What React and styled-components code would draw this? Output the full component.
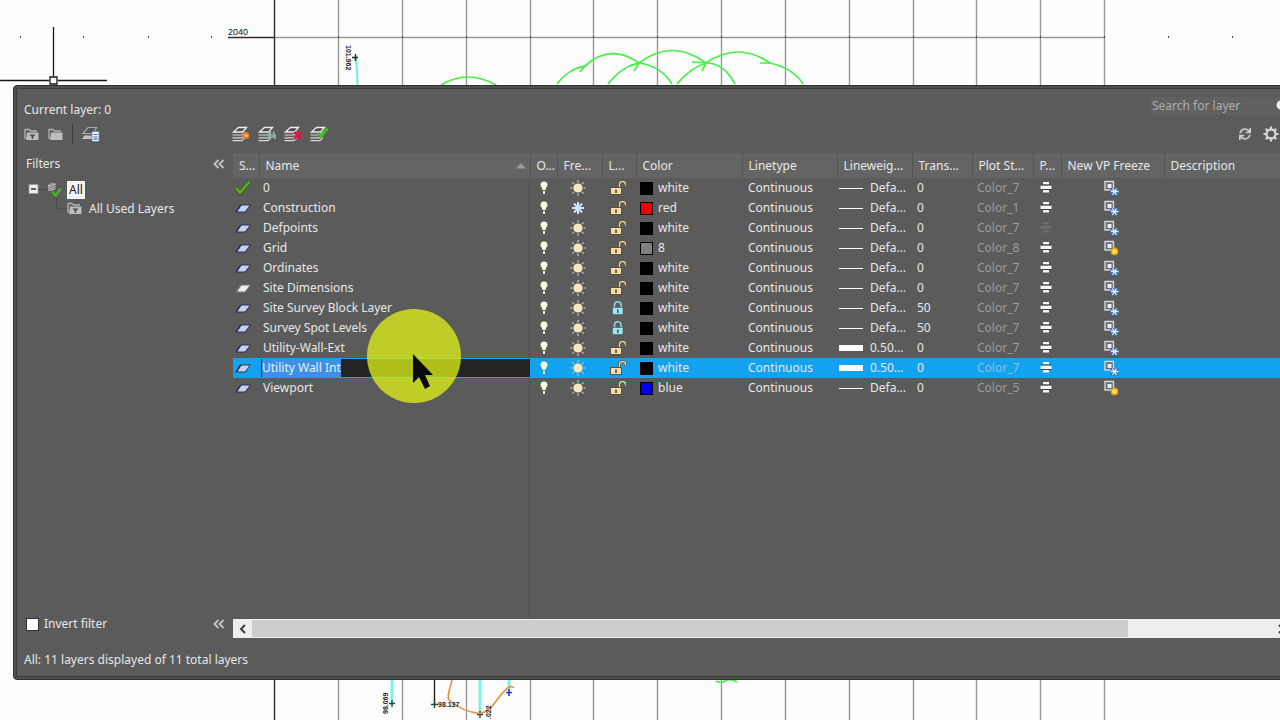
import React, { useEffect, useRef, useState } from 'react'
import styled, { createGlobalStyle } from 'styled-components'
import { FaSync } from 'react-icons/fa'

const GlobalStyle = createGlobalStyle`
  * { box-sizing: border-box; }
  body {
    margin: 0;
    overflow: hidden;
    background: #fdfdfd;
    color: #e8e8e8;
    font: 12px/20px 'Noto Sans', 'Open Sans', sans-serif;
  }
  button, input { font: inherit; color: inherit; }
`

const Page = styled.div`
  position: relative;
  display: grid;
  grid-template-rows: 85px 1fr 40px;
  min-height: 100vh;
  overflow: hidden;
`

const Canvas = styled.svg`
  position: absolute;
  inset: 0;
  width: 100%;
  height: 100%;
  font-family: 'Liberation Sans', Arial, sans-serif;
`

const Palette = styled.section`
  position: relative;
  grid-row: 2;
  display: flex;
  margin: 0 -20px 0 13px;
  padding: 2px;
  border: 1px solid #303030;
  border-radius: 4px;
  background: #505050;
`

const Inner = styled.div`
  flex: 1;
  min-width: 0;
  display: flex;
  flex-direction: column;
  padding-left: 7px;
  border: 1px solid #3c3c3c;
  border-right: 0;
  border-radius: 2px;
  background: #5b5b5b;
`

const TopBar = styled.header`
  display: flex;
  justify-content: space-between;
  align-items: flex-start;
  height: 33px;
  padding-top: 8px;
`

const Title = styled.h1`
  margin: 0;
  font-size: 12px;
  font-weight: 400;
  line-height: 26px;
`

const Search = styled.label`
  display: flex;
  align-items: center;
  width: 146px;
  height: 18px;
  background: #616161;

  input {
    width: 124px;
    height: 18px;
    padding: 0 0 0 1px;
    border: 0;
    outline: 0;
    background: none;
  }
  input::placeholder { color: #adadad; opacity: 1; }
`

const Toolbar = styled.div`
  display: flex;
  align-items: center;
  height: 24px;
  margin-bottom: 7px;
`

const ToolGroup = styled.div`
  display: flex;
  align-items: center;
  gap: ${(p) => p.$gap}px;
  width: ${(p) => p.$width || 'auto'};
  margin-left: ${(p) => (p.$end ? 'auto' : 0)};
  padding-right: ${(p) => (p.$end ? '18px' : 0)};
`

const Divider = styled.span`
  width: 1px;
  height: 20px;
  background: #3c3c3c;
`

const IconButton = styled.button`
  display: flex;
  padding: 0;
  border: 0;
  background: none;
  color: #cfcfcf;
`

const Body = styled.div`
  flex: 1;
  display: grid;
  grid-template-columns: 209px minmax(0, 1fr);
`

const Filters = styled.aside`
  display: flex;
  flex-direction: column;
  padding: 1px 8px 4px 2px;
`

const FilterLine = styled.div`
  display: flex;
  align-items: center;
  justify-content: space-between;
  height: 20px;
`

const Tree = styled.ul`
  flex: 1;
  margin: 0;
  padding: 6px 0 0;
  list-style: none;
  line-height: 18px;

  ul { margin: 0; padding: 0 0 0 30px; list-style: none; }
`

const TreeItem = styled.div`
  display: flex;
  align-items: center;
  height: 19px;
`

const TreeLabel = styled.span`
  margin-left: ${(p) => (p.$active ? 4 : 7)}px;
  padding: 0 ${(p) => (p.$active ? 2 : 0)}px;
  background: ${(p) => (p.$active ? '#f4f4f4' : 'none')};
  color: ${(p) => (p.$active ? '#1c1c1c' : 'inherit')};
`

const Check = styled.label`
  display: flex;
  align-items: center;
  gap: 5px;

  input {
    appearance: none;
    width: 13px;
    height: 13px;
    margin: 0;
    border: 1px solid #333;
    background: #fff;
  }
`

const ListPane = styled.div`
  display: flex;
  flex-direction: column;
  min-width: 0;
`

const ListArea = styled.div`
  flex: 1;
  background: linear-gradient(#4e4e4e, #4e4e4e) 296px 0 / 1px 100% no-repeat;
`

const Table = styled.table`
  width: 100%;
  table-layout: fixed;
  border-collapse: collapse;
`

const Th = styled.th`
  height: 25px;
  padding: 0 0 0 6px;
  border-right: 1px solid #545454;
  background: #646464;
  font-weight: 400;
  text-align: left;
  white-space: nowrap;
`

const SortHead = styled.span`
  display: flex;
  align-items: center;
  justify-content: space-between;
  padding-right: 4px;
`

const Tr = styled.tr`
  height: 20px;
  background: ${(p) => (p.$selected ? '#12a2ee' : 'none')};
`

const Td = styled.td`
  height: 20px;
  padding: 0 0 0 ${(p) => p.$pad ?? 0}px;
  color: ${(p) => (p.$dim ? (p.$selected ? '#8bbfe2' : '#9c9c9c') : 'inherit')};
  white-space: nowrap;
  line-height: 18px;

  svg { display: block; margin: 0 ${(p) => (p.$center ? 'auto' : 0)}; }
`

const WithIcon = styled.span`
  display: flex;
  align-items: center;
  gap: ${(p) => p.$gap}px;
`

const NameInput = styled.input`
  display: block;
  width: 100%;
  height: 18px;
  padding: 0 0 0 1px;
  border: 0;
  outline: 0;
  background: #242424;

  &::selection { background: #3c90ea; color: #e8f2ff; }
`

const Swatch = styled.i`
  width: 13px;
  height: 13px;
  border: 1px solid #000;
  background: ${(p) => p.$color};
`

const Weight = styled.i`
  width: 24px;
  height: ${(p) => (p.$thick ? 6 : 1)}px;
  background: #fff;
`

const ScrollBar = styled.div`
  display: flex;
  height: 19px;
  margin-right: 7px;
  padding: 1px 0;
  background: #eee;
`

const ScrollButton = styled.button`
  display: flex;
  align-items: center;
  justify-content: center;
  width: 19px;
  padding: 0;
  border: 0;
  background: none;
  color: #404040;
`

const ScrollTrack = styled.div`
  flex: 1;

  span { display: block; width: 86%; height: 100%; background: #cdcdcd; }
`

const Status = styled.footer`
  height: 38px;
  padding-top: 9px;
  line-height: 26px;
`

const Pointer = styled.svg`
  position: absolute;
  left: 366px;
  top: 308px;
  pointer-events: none;
`

const Folder = ({ filter }) => (
  <svg width="15" height="13" viewBox="0 0 15 13">
    <path d="M1 11V1.5h4l1.5 1.5H13" fill="none" stroke="#b4b4b4" strokeWidth="1.3" />
    <path d="M3 4.5h11.5v7.5H2z" fill="#bdbdbd" />
    {filter && <path d="M5.5 6.5h6L9.2 9v2H7.8V9z" fill="#4c4c4c" />}
  </svg>
)

const LayerStates = () => (
  <svg width="18" height="16" viewBox="0 0 18 16">
    <path d="M1 7.5L6 1.5h8.5L11 7.5z" fill="#555" stroke="#aaa" strokeWidth="1.2" />
    <path d="M0 13h10V9.5H2.5z" fill="#c4c4c4" />
    <path d="M10 5.500h7v10h-7z" fill="#f6f8ff" stroke="#6178a8" strokeWidth=".8" />
    <path d="M11.500 8.500h4M11.500 11h4M11.500 13.200h4" stroke="#3a66c4" strokeWidth="1.2" />
  </svg>
)

const LayerTool = ({ kind }) => (
  <svg width="18" height="16" viewBox="0 0 18 16">
    <path d="M1.5 6L6.500 1.500h8L10.500 6z" fill="#4b4b4b" stroke="#ededed" strokeWidth="1.3" />
    <path d="M.5 9h9.500l3-3M.5 11.800h9.500l3-3M.5 14.600h9.500l3-3" fill="none" stroke="#d6d6d6" strokeWidth="1.2" />
    {kind === 'new' && <circle cx="14" cy="9.500" r="2.500" fill="#ffc48a" stroke="#e9781c" strokeWidth="1.8" />}
    {kind === 'frozen' && <path d="M10 9h8M10 11h8M12.500 5.500l-1 7.500M15.500 5.500l1.500 7.500" stroke="#8fb5ad" strokeWidth="1.6" />}
    {kind === 'delete' && <path d="M10.500 6l6.500 6.500M17 6l-6.500 6.500" stroke="#e5143c" strokeWidth="2.6" />}
    {kind === 'current' && <path d="M8 7l3 3.500L17.500 2.500" fill="none" stroke="#3fc41d" strokeWidth="3" />}
  </svg>
)

const Gear = () => (
  <svg width="16" height="16" viewBox="0 0 16 16" stroke="#d4d4d4" fill="none">
    <circle cx="8" cy="8" r="4.5" strokeWidth="2.4" />
    <path d="M8 .5V3M8 13v2.500M.5 8H3M13 8h2.500M2.700 2.700l1.800 1.800M11.500 11.500l1.800 1.800M13.300 2.700l-1.800 1.800M4.500 11.500l-1.800 1.800" strokeWidth="2.2" />
  </svg>
)

const Collapse = () => (
  <svg width="12" height="10" viewBox="0 0 12 10">
    <path d="M5.500 1l-4 4 4 4M10.500 1l-4 4 4 4" fill="none" stroke="#c4c4c4" strokeWidth="1.8" />
  </svg>
)

const Chevron = ({ right }) => (
  <svg width="8" height="10" viewBox="0 0 8 10">
    <path d={right ? 'M2 1l4 4-4 4' : 'M6 1L2 5l4 4'} fill="none" stroke="currentColor" strokeWidth="2" />
  </svg>
)

const TreeRoot = () => (
  <svg width="37" height="19" viewBox="0 0 37 19">
    <path d="M13 9.500h9M28.500 15v4" stroke="#3c3c3c" strokeDasharray="1 1" />
    <path d="M3 4.500h9v9H3z" fill="#eee" stroke="#999" />
    <path d="M5 9h5" stroke="#222" strokeWidth="1.4" />
    <path d="M22 6l2.500-2h5l-2 2zM22 8h5.500l2-2M22 10h5.500l2-2" fill="none" stroke="#ddd" />
    <path d="M26.500 12l3 3.500 5.500-7" fill="none" stroke="#4cb523" strokeWidth="2.4" />
  </svg>
)

const TreeBranch = () => (
  <svg width="11" height="19" viewBox="0 0 11 19">
    <path d="M.5 0v9.500H10" fill="none" stroke="#3c3c3c" strokeDasharray="1 1" />
  </svg>
)

const StatusIcon = ({ kind }) => {
  if (kind === 'current') {
    return (
      <svg width="20" height="16" viewBox="0 0 20 16">
        <path d="M3 8.500l4 4.500L16.500 2.500" fill="none" stroke="#2e5f10" strokeWidth="3.4" />
        <path d="M3 8l4 4.500L16.500 2" fill="none" stroke="#5db313" strokeWidth="2.4" />
      </svg>
    )
  }
  const empty = kind === 'empty'
  return (
    <svg width="20" height="16" viewBox="0 0 20 16">
      <path d="M2 12.500L7 4.500h11L12.500 12.500z" fill={empty ? '#77736e' : '#27334f'} />
      <path d="M4.500 11.500L8.500 5.500h8L12 11.500z" fill={empty ? '#efefef' : '#c3d5f7'} />
    </svg>
  )
}

const Bulb = () => (
  <svg width="10" height="16" viewBox="0 0 10 16">
    <path d="M5 1.500C2.500 1.500 1.500 3.200 1.500 5c0 1.800 1.800 2.800 2 5h3c.2-2.200 2-3.200 2-5 0-1.800-1-3.500-3.500-3.500z" fill="#fdfbe2" />
    <path d="M5 11v3" stroke="#efeccb" strokeWidth="2" />
  </svg>
)

const Freeze = ({ frozen }) =>
  frozen ? (
    <svg width="18" height="18" viewBox="0 0 18 18">
      <path d="M9 3v12M3 9h12M5 4.500l8 9M13 4.500l-8 9" stroke="#cfe2fb" strokeWidth="2" />
    </svg>
  ) : (
    <svg width="18" height="18" viewBox="0 0 18 18">
      <path d="M9 1v2.500M9 14.500V17M1 9h2.500M14.500 9H17M3.300 3.300l1.800 1.800M12.900 12.900l1.800 1.800M14.700 3.300l-1.800 1.800M5.100 12.900l-1.800 1.800" stroke="#c3c1bd" strokeWidth="1.2" />
      <circle cx="9" cy="9" r="4.600" fill="#fae8bd" />
    </svg>
  )

const Lock = ({ locked }) =>
  locked ? (
    <svg width="18" height="16" viewBox="0 0 18 16">
      <path d="M5.500 8V5a3.300 3.300 0 016.600 0v3" fill="none" stroke="#8fd3da" strokeWidth="1.6" />
      <path d="M3.500 7.500h10.500v7H3.500z" fill="#a9e3e8" stroke="#2f6f78" strokeWidth=".7" />
      <path d="M8.800 9.500v3.500" stroke="#235a62" strokeWidth="1.5" />
    </svg>
  ) : (
    <svg width="18" height="16" viewBox="0 0 18 16">
      <path d="M10.500 8V4.500a3 3 0 016 0v1" fill="none" stroke="#463a20" strokeWidth="2.6" />
      <path d="M10.500 8V4.500a3 3 0 016 0v1" fill="none" stroke="#edd6a5" strokeWidth="1.4" />
      <path d="M1.500 7.500h11v7h-11z" fill="#f3dcae" stroke="#463a20" strokeWidth=".8" />
      <path d="M7 9.500v3.500" stroke="#4a3e25" strokeWidth="1.5" />
    </svg>
  )

const Printer = ({ off }) => (
  <svg width="12" height="14" viewBox="0 0 12 14" opacity={off ? 0.12 : 1}>
    <path d="M3 1h6v2.500H3zM.5 4.500h11v3.500H.5zM3 9h6v2.500H3z" fill="#f6f6f6" />
    <path d="M.5 4h11M.5 8.500h11" stroke="#353535" strokeWidth=".8" />
  </svg>
)

const VpFreeze = ({ thawed }) => (
  <svg width="16" height="16" viewBox="0 0 16 16">
    <path d="M2 1.500h8.500V10H2z" fill="#686a72" stroke="#d5d5de" strokeWidth="1.4" />
    <path d="M4.500 4h4v4h-4z" fill="#ececf4" />
    {thawed ? (
      <circle cx="11.500" cy="11.500" r="3.200" fill="#ffe14a" stroke="#e8960f" strokeWidth="1.4" />
    ) : (
      <>
        <path d="M7.500 8h8v7.500h-8z" fill="#2f6db5" opacity=".8" />
        <path d="M8 11.500h7.500M9.500 8.500l4 6.500M13.500 8.500l-4 6.500" stroke="#e6f3ff" strokeWidth="1.3" />
      </>
    )}
  </svg>
)

const columns = [
  ['S...', 26], ['Name', 271], ['O...', 27], ['Fre...', 45], ['L...', 34], ['Color', 106],
  ['Linetype', 95], ['Lineweig...', 75], ['Trans...', 60], ['Plot St...', 61], ['P...', 28],
  ['New VP Freeze', 103], ['Description', null],
]

const layers = [
  { name: '0', status: 'current', color: 'white', plot: 'Color_7' },
  { name: 'Construction', color: 'red', plot: 'Color_1', frozen: true },
  { name: 'Defpoints', color: 'white', plot: 'Color_7', noPrint: true },
  { name: 'Grid', color: '8', plot: 'Color_8', thawed: true },
  { name: 'Ordinates', color: 'white', plot: 'Color_7' },
  { name: 'Site Dimensions', status: 'empty', color: 'white', plot: 'Color_7' },
  { name: 'Site Survey Block Layer', color: 'white', plot: 'Color_7', locked: true, trans: 50 },
  { name: 'Survey Spot Levels', color: 'white', plot: 'Color_7', locked: true, trans: 50 },
  { name: 'Utility-Wall-Ext', color: 'white', plot: 'Color_7', weight: '0.50...' },
  { name: 'Utility Wall Int', color: 'white', plot: 'Color_7', weight: '0.50...', selected: true },
  { name: 'Viewport', color: 'blue', plot: 'Color_5', thawed: true },
]

// "white" plots black on a light background
const swatches = { white: '#000', red: '#f00000', 8: '#808080', blue: '#0000f0' }

const gridLines = [338, 402, 466, 530, 593, 657, 721, 785, 849, 913, 976, 1040, 1104]

const SitePlan = () => (
  <Canvas viewBox="0 0 1280 720" preserveAspectRatio="xMinYMin slice" aria-hidden="true">
    {gridLines.map((x) => (
      <path key={x} d={`M${x + 0.5} 0V720`} stroke="#999" strokeWidth="1.4" />
    ))}
    <path d="M274 37.500H1105" stroke="#999" strokeWidth="1.4" />
    <path d="M228 37.500H274M274.500 0V720" stroke="#2c2c2c" strokeWidth="1.4" />
    {[20, 83, 148, 211, ...gridLines, 1168, 1232].map((x) => (
      <rect key={x} x={x} y="36" width="1" height="2" fill="#444" />
    ))}
    <text x="228" y="35" fontSize="9" fill="#111">2040</text>
    <path d="M53.500 27V76M0 80.500H49M58 80.500H107" stroke="#151515" strokeWidth="1.3" />
    <path d="M50 77h7v7h-7z" fill="#fff" stroke="#151515" strokeWidth="1.3" />

    <text transform="translate(346 45) rotate(90)" fontSize="7" fontWeight="700" fill="#222">101.962</text>
    <path d="M355.500 57Q357 68 357.500 85" fill="none" stroke="#5cf5e4" strokeWidth="1.8" />
    <path d="M352 57.500h6M355.500 54v7" stroke="#222" strokeWidth="1.4" />

    <g fill="none" stroke="#46ee46" strokeWidth="1.7">
      <path d="M441 85Q467 69 496 85" />
      <path d="M557 84Q568 69 585 66Q610 43 639 63Q661 66 672 84" />
      <path d="M608 84Q622 66 639 63Q672 38 706 63Q724 63 735 84" />
      <path d="M677 84Q690 68 706 63Q738 41 770 63Q793 68 803 84" />
      <path d="M577 68l8-2-5 6M630 66l9-3-5 8M692 62l14 1-4 8M760 63l10 0" />
      <path d="M716 681q5 3 9 0t12 1" />
    </g>

    <path d="M392 680V702M480 680V712M509 680V690" stroke="#7cf3e2" strokeWidth="3" />
    <path d="M434.500 680V704" stroke="#222" strokeWidth="1.4" />
    <path d="M389 703.500h6M392 700v7M431 704.500h7M434.500 701v7M477 714.500h6M480 711v7" stroke="#24463e" strokeWidth="1.4" />
    <path d="M506 692.500h6M509 689v7" stroke="#2636d8" strokeWidth="1.6" />
    <path d="M452 680C449 691 447 697 449 700Q463 712 480 713.500C494 711 497 695 509 687q3-1 5 1" fill="none" stroke="#e59143" strokeWidth="1.6" />
    <text transform="translate(388 714) rotate(-90)" fontSize="7" fontWeight="700" fill="#222">98.069</text>
    <text x="438" y="707" fontSize="7" fontWeight="700" fill="#222">98.137</text>
    <text transform="translate(491 719) rotate(-90)" fontSize="7" fontWeight="700" fill="#222">.022</text>
  </Canvas>
)

const LayerRow = ({ layer }) => {
  const { selected } = layer
  const [name, setName] = useState(layer.name)
  const nameRef = useRef(null)

  useEffect(() => {
    if (nameRef.current) {
      nameRef.current.focus()
      nameRef.current.select()
    }
  }, [])

  return (
    <Tr $selected={selected}>
      <Td><StatusIcon kind={layer.status} /></Td>
      <Td $pad={selected ? 2 : 4}>
        {selected ? (
          <NameInput ref={nameRef} aria-label="Layer name" value={name} onChange={(e) => setName(e.target.value)} />
        ) : name}
      </Td>
      <Td $center><Bulb /></Td>
      <Td $pad={12}><Freeze frozen={layer.frozen} /></Td>
      <Td $pad={7}><Lock locked={layer.locked} /></Td>
      <Td $pad={4}>
        <WithIcon $gap={5}><Swatch $color={swatches[layer.color]} />{layer.color}</WithIcon>
      </Td>
      <Td $pad={6}>Continuous</Td>
      <Td $pad={2}>
        <WithIcon $gap={7}><Weight $thick={layer.weight} />{layer.weight || 'Defa...'}</WithIcon>
      </Td>
      <Td $pad={5}>{layer.trans || 0}</Td>
      <Td $pad={5} $dim $selected={selected}>{layer.plot}</Td>
      <Td $pad={7}><Printer off={layer.noPrint} /></Td>
      <Td $pad={42}><VpFreeze thawed={layer.thawed} /></Td>
      <Td />
    </Tr>
  )
}

const App = () => {
  const [invert, setInvert] = useState(false)

  return (
    <Page>
      <GlobalStyle />
      <SitePlan />
      <Palette>
        <Inner>
          <TopBar>
            <Title>Current layer: 0</Title>
            <Search>
              <input type="text" placeholder="Search for layer" aria-label="Search for layer" />
              <svg width="12" height="12" viewBox="0 0 12 12"><circle cx="6" cy="5" r="4.500" fill="#eee" /></svg>
            </Search>
          </TopBar>

          <Toolbar>
            <ToolGroup $gap={9} $width="208px">
              <IconButton aria-label="New property filter"><Folder filter /></IconButton>
              <IconButton aria-label="New group filter"><Folder /></IconButton>
              <Divider />
              <IconButton aria-label="Layer states manager"><LayerStates /></IconButton>
            </ToolGroup>
            <ToolGroup $gap={8}>
              <IconButton aria-label="New layer"><LayerTool kind="new" /></IconButton>
              <IconButton aria-label="New layer frozen in all viewports"><LayerTool kind="frozen" /></IconButton>
              <IconButton aria-label="Delete layer"><LayerTool kind="delete" /></IconButton>
              <IconButton aria-label="Set current"><LayerTool kind="current" /></IconButton>
            </ToolGroup>
            <ToolGroup $gap={12} $end>
              <IconButton aria-label="Refresh"><FaSync size={12} /></IconButton>
              <IconButton aria-label="Settings"><Gear /></IconButton>
            </ToolGroup>
          </Toolbar>

          <Body>
            <Filters>
              <FilterLine>
                <span>Filters</span>
                <IconButton aria-label="Collapse filters"><Collapse /></IconButton>
              </FilterLine>
              <Tree>
                <li>
                  <TreeItem><TreeRoot /><TreeLabel $active>All</TreeLabel></TreeItem>
                  <ul>
                    <li>
                      <TreeItem><TreeBranch /><Folder filter /><TreeLabel>All Used Layers</TreeLabel></TreeItem>
                    </li>
                  </ul>
                </li>
              </Tree>
              <FilterLine>
                <Check>
                  <input type="checkbox" checked={invert} onChange={() => setInvert(!invert)} />
                  Invert filter
                </Check>
                <IconButton aria-label="Collapse tree"><Collapse /></IconButton>
              </FilterLine>
            </Filters>

            <ListPane>
              <ListArea>
                <Table>
                  <colgroup>
                    {columns.map(([label, width]) => (
                      <col key={label} width={width || undefined} />
                    ))}
                  </colgroup>
                  <thead>
                    <tr>
                      {columns.map(([label]) => (
                        <Th key={label}>
                          {label === 'Name' ? (
                            <SortHead>
                              Name
                              <svg width="10" height="6" viewBox="0 0 10 6"><path d="M5 0l5 5.500H0z" fill="#9c9c9c" /></svg>
                            </SortHead>
                          ) : label}
                        </Th>
                      ))}
                    </tr>
                  </thead>
                  <tbody>
                    {layers.map((layer) => (
                      <LayerRow key={layer.name} layer={layer} />
                    ))}
                  </tbody>
                </Table>
              </ListArea>
              <ScrollBar>
                <ScrollButton aria-label="Scroll left"><Chevron /></ScrollButton>
                <ScrollTrack><span /></ScrollTrack>
                <ScrollButton aria-label="Scroll right"><Chevron right /></ScrollButton>
              </ScrollBar>
            </ListPane>
          </Body>

          <Status>All: 11 layers displayed of 11 total layers</Status>
        </Inner>
      </Palette>

      <Pointer width="96" height="96" viewBox="0 0 96 96">
        <circle cx="48" cy="48" r="47" fill="rgba(230, 250, 22, 0.72)" />
        <path d="M47 46v29l6-6 6 12 5-3-5-11h8z" fill="#0a0a0a" />
      </Pointer>
    </Page>
  )
}

export default App
